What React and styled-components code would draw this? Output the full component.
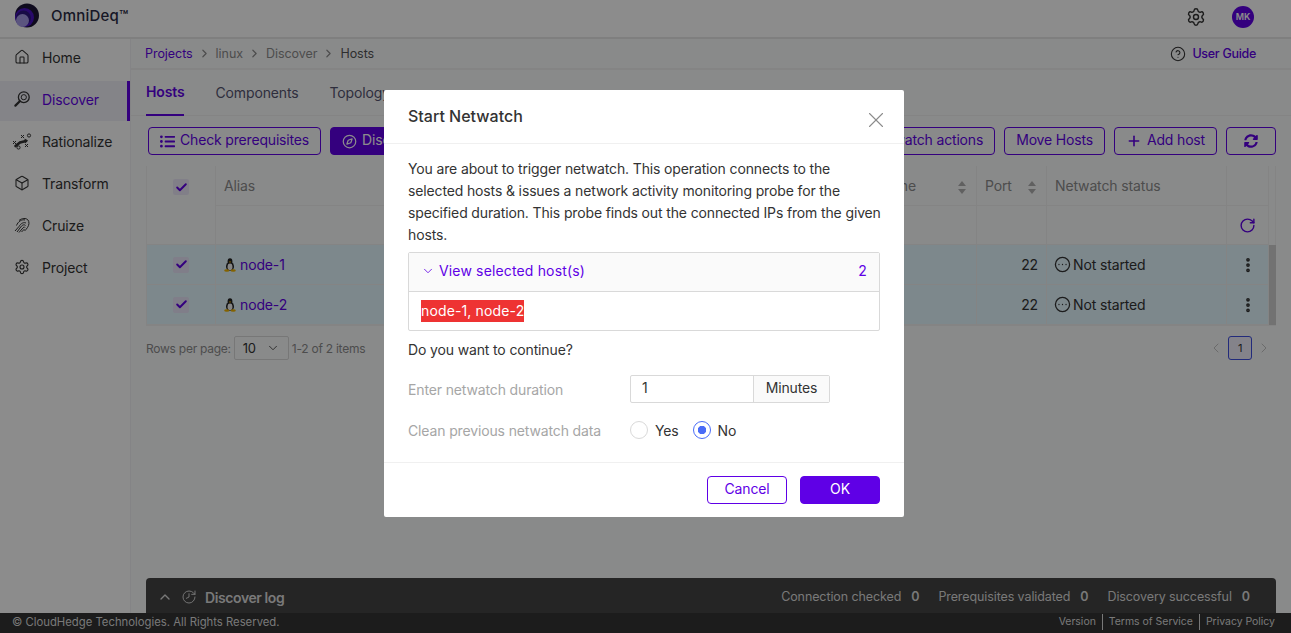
import React from 'react'
import styled, { createGlobalStyle } from 'styled-components'
import {
  House, Box, Settings, CircleHelp, Compass, Plus, RotateCw,
  EllipsisVertical, CircleEllipsis, ChevronUp, ChevronDown, ChevronLeft, ChevronRight,
  ChevronRight as Crumb, Check, X, History
} from 'lucide-react'
import { FaListUl, FaSyncAlt } from 'react-icons/fa'

const primary = '#5f00e6'

const GlobalStyle = createGlobalStyle`
  html, body { margin: 0; height: 100%; overflow: hidden; }
  body { font-family: Inter, "Open Sans", "Liberation Sans", sans-serif; font-size: 14px; letter-spacing: -0.14px; color: #333; background: #fff; }
  * { box-sizing: border-box; }
`

const Page = styled.div`
  height: 633px;
  display: flex;
  flex-direction: column;
  position: relative;
  overflow: hidden;
`

const TopBar = styled.header`
  height: 39px;
  flex: none;
  display: flex;
  align-items: center;
  padding: 0 37px 0 15px;
  border-bottom: 2px solid #e8e8e8;
  background: #fff;
`

const Brand = styled.div`
  display: flex;
  align-items: center;
  gap: 12px;
  margin-right: auto;
  font-size: 15px;
  letter-spacing: 0.2px;
  font-weight: 500;
  color: #2b2b45;
  margin-top: -7px;
`

const GearButton = styled.span`
  display: flex;
  margin-top: -4px;
  color: #333;
`

const Avatar = styled.div`
  width: 22px;
  height: 22px;
  border-radius: 50%;
  margin-left: 26px;
  margin-top: -4px;
  background: ${primary};
  color: #fff;
  font-size: 9px;
  font-weight: 600;
  display: flex;
  align-items: center;
  justify-content: center;
`

const Shell = styled.div`
  flex: 1;
  min-height: 0;
  display: flex;
`

const Sidebar = styled.nav`
  width: 131px;
  flex: none;
  border-right: 1px solid #f0f0f4;
`

const NavItem = styled.div`
  height: 40px;
  margin-bottom: 2px;
  padding: 0 0 4px 14px;
  display: flex;
  align-items: center;
  gap: 12px;
  font-size: 14px;
  color: ${p => (p.$active ? primary : '#333')};
  background: ${p => (p.$active ? '#f0f0f8' : 'transparent')};
  border-right: ${p => (p.$active ? `3px solid ${primary}` : '0')};
  svg { color: #333; flex: none; }
`

const Main = styled.main`
  flex: 1;
  min-width: 0;
  display: flex;
  flex-direction: column;
  background: #fafbfc;
  padding: 0 15px;
`

const Breadcrumb = styled.div`
  height: 31px;
  margin: 0 -15px;
  padding: 0 35px 0 14px;
  display: flex;
  align-items: center;
  gap: 5px;
  font-size: 12.5px;
  letter-spacing: -0.05px;
  color: #8c8c8c;
  border-bottom: 2px solid #f0f0f0;
  svg { color: #8c8c8c; }
`

const CrumbLink = styled.span`
  color: ${p => p.$color || 'inherit'};
`

const Guide = styled.div`
  margin-left: auto;
  display: flex;
  align-items: center;
  gap: 6px;
  color: ${primary};
  font-weight: 500;
  font-size: 12.5px;
  letter-spacing: -0.3px;
  svg { color: #333; }
`

const Tabs = styled.div`
  height: 46px;
  margin: 0 -15px;
  padding: 0 15px;
  display: flex;
  gap: 31px;
  border-bottom: 1px solid #f0f0f0;
`

const Tab = styled.div`
  height: 46px;
  display: flex;
  align-items: center;
  padding-bottom: 2px;
  font-size: 14px;
  font-weight: ${p => (p.$active ? 600 : 400)};
  color: ${p => (p.$active ? primary : '#555570')};
  border-bottom: ${p => (p.$active ? `2px solid ${primary}` : '0')};
`

const Toolbar = styled.div`
  display: flex;
  align-items: center;
  gap: 9px;
  padding: 11px 0 11px 2px;
`

const Button = styled.button`
  height: 28px;
  padding: 0 11px 3px;
  display: inline-flex;
  align-items: center;
  gap: 5px;
  border-radius: 4px;
  border: 1px solid ${primary};
  background: ${p => (p.$solid ? primary : 'transparent')};
  color: ${p => (p.$solid ? '#fff' : primary)};
  font: inherit;
  font-size: 14px;
  letter-spacing: -0.17px;
  white-space: nowrap;
  margin-left: ${p => (p.$push ? 'auto' : '0')};
  svg { margin-top: 3px; }
`

const IconButton = styled(Button)`
  width: 50px;
  justify-content: center;
`

const Table = styled.div`
  border: 1px solid #f0f0f0;
  border-top: 0;
  display: grid;
  grid-template-columns: 69px 384px 241px 136px 70px 180px 42px 7px;
  grid-template-rows: 40px 39px 40px 40px;
`

const Cell = styled.div`
  display: flex;
  align-items: center;
  gap: 4px;
  min-width: 0;
  padding: 0 8px;
  white-space: nowrap;
  overflow: hidden;
  color: ${p => (p.$head ? '#8c8c8c' : '#333')};
  background: ${p => (p.$selected ? '#e4f7ff' : 'transparent')};
  border-right: 1px solid #f0f0f0;
  border-bottom: 1px solid #f0f0f0;
  justify-content: ${p => p.$justify || 'flex-start'};
`

const StatusCell = styled(Cell)`
  gap: 2px;
  padding-left: 7px;
`

const SelectAll = styled(Cell)`
  grid-row: span 2;
  align-items: flex-start;
  padding-top: 13px;
`

const Gutter = styled.div`
  background: ${p => (p.$thumb ? '#d0d0d0' : 'transparent')};
`

const SortHead = styled(Cell)`
  justify-content: space-between;
  padding-right: 10px;
`

const SortArrows = styled.span`
  display: flex;
  flex-direction: column;
  gap: 3px;
  margin-top: 3px;
  &::before, &::after {
    content: '';
    border-left: 4px solid transparent;
    border-right: 4px solid transparent;
  }
  &::before { border-bottom: 5px solid #b0b0b0; }
  &::after { border-top: 5px solid #b0b0b0; }
`

const CheckBox = styled.span`
  width: 16px;
  height: 16px;
  border-radius: 2px;
  background: ${p => (p.$tint || '#ece8f8')};
  color: ${primary};
  display: flex;
  align-items: center;
  justify-content: center;
`

const HostLink = styled.span`
  color: ${primary};
`

const Pager = styled.div`
  display: flex;
  align-items: center;
  height: 24px;
  margin-top: 10px;
  font-size: 12px;
  letter-spacing: -0.25px;
  color: #8c8c8c;
  gap: 3px;
`

const PageSize = styled.div`
  width: 55px;
  height: 24px;
  display: flex;
  align-items: center;
  justify-content: space-between;
  padding: 0 8px;
  border: 1px solid #d9d9d9;
  border-radius: 2px;
  color: #333;
  font-size: 13px;
`

const PageNav = styled.div`
  margin-left: auto;
  margin-right: 4px;
  display: flex;
  align-items: center;
  gap: 4px;
  color: #bfbfbf;
`

const PageNumber = styled.div`
  width: 24px;
  height: 24px;
  border: 1px solid #3f4fe0;
  border-radius: 3px;
  background: #f0eefc;
  color: #333;
  font-size: 11px;
  display: flex;
  align-items: center;
  justify-content: center;
`

const LogBar = styled.div`
  margin-top: auto;
  height: 35px;
  padding: 1px 26px 0 11px;
  display: flex;
  align-items: center;
  background: #444;
  border-radius: 4px 4px 0 0;
  color: #dcdcdc;
  font-size: 12.5px;
  letter-spacing: -0.1px;
`

const LogTitle = styled.div`
  display: flex;
  align-items: center;
  gap: 8px;
  padding-top: 2px;
  font-size: 14px;
  letter-spacing: -0.4px;
  font-weight: 600;
  margin-right: auto;
`

const Stat = styled.div`
  margin-left: 19px;
  display: flex;
  gap: 10px;
  b { font-weight: 600; }
`

const Footer = styled.footer`
  height: 20px;
  flex: none;
  display: flex;
  align-items: center;
  padding: 0 16px 2px 12px;
  background: #333;
  color: #dcdcdc;
  font-size: 11.3px;
  letter-spacing: 0;
`

const FooterLink = styled.span`
  padding: 0 6px;
  font-size: 10.5px;
  letter-spacing: -0.03px;
  line-height: 16px;
  border-left: ${p => (p.$first ? '0' : '1px solid #dcdcdc')};
  margin-left: ${p => (p.$first ? 'auto' : '0')};
  &:last-child { padding-right: 0; }
`

const Overlay = styled.div`
  position: absolute;
  inset: 0;
  background: rgba(0, 0, 0, 0.45);
  padding: 90px 0 0 384px;
`

const Dialog = styled.div`
  width: 520px;
  height: 427px;
  background: #fff;
  border-radius: 2px;
  display: flex;
  flex-direction: column;
`

const DialogHeader = styled.div`
  height: 54px;
  flex: none;
  padding: 0 15px 2px 24px;
  display: flex;
  align-items: center;
  justify-content: space-between;
  border-bottom: 1px solid #f0f0f0;
  font-size: 16px;
  font-weight: 500;
  letter-spacing: 0;
  svg { color: #8c8c8c; margin-top: 8px; }
`

const DialogBody = styled.div`
  flex: 1;
  padding: 14px 24px 0;
`

const Paragraph = styled.p`
  margin: 0 -6px 0 0;
  line-height: 22px;
  font-size: 14px;
`

const Collapse = styled.div`
  margin-top: 6px;
  border: 1px solid #d9d9d9;
  border-radius: 2px;
`

const CollapseHead = styled.div`
  height: 39px;
  display: flex;
  align-items: center;
  gap: 4px;
  padding: 0 12px 3px;
  background: #fafafa;
  border-bottom: 1px solid #d9d9d9;
  color: ${primary};
  letter-spacing: 0.15px;
  span:last-child { margin-left: auto; }
`

const CollapseBody = styled.div`
  height: 38px;
  display: flex;
  align-items: center;
  padding: 0 12px;
`

const Tag = styled.span`
  background: #ee3333;
  color: #fff;
  line-height: 22px;
  letter-spacing: 0.14px;
`

const Question = styled.div`
  margin: 8px 0 14px;
  line-height: 22px;
`

const FormRow = styled.div`
  display: flex;
  align-items: center;
  height: 28px;
  margin-bottom: 13px;
`

const Label = styled.div`
  width: 222px;
  flex: none;
  color: #a6a6a6;
`

const InputGroup = styled.div`
  width: 200px;
  height: 28px;
  display: flex;
  border: 1px solid #d9d9d9;
  border-radius: 2px;
`

const InputValue = styled.div`
  flex: 1;
  padding: 0 0 3px 11px;
  display: flex;
  align-items: center;
`

const Addon = styled.div`
  width: 76px;
  padding-bottom: 3px;
  background: #fafafa;
  border-left: 1px solid #d9d9d9;
  display: flex;
  align-items: center;
  justify-content: center;
`

const Radio = styled.span`
  display: flex;
  align-items: center;
  gap: 7px;
  margin-right: 14px;
  &::before {
    content: '';
    width: 16px;
    height: 16px;
    border-radius: 50%;
    border: ${p => (p.$on ? '1px solid #4a6cf7' : '1px solid #d9d9d9')};
    background: ${p => (p.$on ? 'radial-gradient(circle, #4a6cf7 0 4px, #fff 4.5px)' : '#fff')};
  }
`

const DialogFooter = styled.div`
  height: 55px;
  flex: none;
  border-top: 1px solid #f0f0f0;
  padding: 0 24px;
  display: flex;
  align-items: center;
  justify-content: flex-end;
  gap: 13px;
`

const DialogButton = styled(Button)`
  width: 80px;
  justify-content: center;
`

const Logo = () => (
  <svg width="24" height="25" viewBox="0 0 24 25">
    <circle cx="12" cy="12.5" r="12" fill="#1c1538" />
    <circle cx="9.5" cy="14.5" r="9.5" fill="#4a12c4" />
    <circle cx="8.5" cy="15" r="7.5" fill="#2c1480" />
    <circle cx="7.5" cy="17.5" r="6.5" fill="#a79ce8" />
  </svg>
)

const DiscoverIcon = () => (
  <svg width="16" height="16" viewBox="0 0 16 16" fill="none" stroke="#333" strokeWidth="1.3">
    <circle cx="9.8" cy="6.2" r="5.4" />
    <circle cx="9.8" cy="6.2" r="2.6" strokeWidth="1" />
    <path d="M5.8 10.2 1.4 14.6" strokeWidth="2.2" strokeLinecap="round" />
  </svg>
)

const RationalizeIcon = () => (
  <svg width="20" height="17" viewBox="0 0 20 17" fill="none" stroke="#333" strokeWidth="1" style={{ margin: '0 -2px 0 -2px' }}>
    <path d="M1 8l3 3M4 8l-3 3M9 2l3 3M12 2 9 5M13 11l3 3M16 11l-3 3" />
    <circle cx="17" cy="2.5" r="1.6" />
    <circle cx="6.5" cy="14.5" r="1.6" />
    <path d="M3.5 13 8 9.5 14 8" strokeWidth="2.6" strokeLinecap="round" />
    <path d="M12.5 5.5 16 7.5 13 10.5z" fill="#333" stroke="none" />
  </svg>
)

const CruizeIcon = () => (
  <svg width="16" height="16" viewBox="0 0 16 16" fill="none" stroke="#333" strokeWidth="1">
    <path d="M1 14 5 9.5C7 6 10 5 12 6M3 15l3-4C8 8 10 7 11.5 8.5M5 15.5l3-3.5c1.5-2 2.5-2.5 3-1.5M7.5 15l3-3M2.5 8.5C4 4.5 8 2 11 3M5 3.5C8 1 12 .8 14 3c1.5 2 1.2 5-.5 7.5-1 1.5-2 2.5-3 3.5" />
  </svg>
)

const TuxIcon = () => (
  <svg width="12" height="14" viewBox="0 0 12 14">
    <ellipse cx="6" cy="3.4" rx="2.4" ry="3.2" fill="#222" />
    <ellipse cx="6" cy="8.4" rx="4" ry="4.4" fill="#222" />
    <ellipse cx="6" cy="8.8" rx="2.5" ry="3.4" fill="#f4f4f4" />
    <ellipse cx="2.8" cy="12.5" rx="2.6" ry="1.3" fill="#f0b400" />
    <ellipse cx="9.2" cy="12.5" rx="2.6" ry="1.3" fill="#f0b400" />
    <path d="M4.8 3.4h2.4L6 5z" fill="#f0b400" />
  </svg>
)

const navItems = [
  { label: 'Home', icon: <House size={16} strokeWidth={1.6} /> },
  { label: 'Discover', icon: <DiscoverIcon />, active: true },
  { label: 'Rationalize', icon: <RationalizeIcon /> },
  { label: 'Transform', icon: <Box size={16} strokeWidth={1.6} /> },
  { label: 'Cruize', icon: <CruizeIcon /> },
  { label: 'Project', icon: <Settings size={16} strokeWidth={1.7} /> }
]

const hosts = ['node-1', 'node-2']

const App = () => {
  return (
    <Page>
      <GlobalStyle />
      <TopBar>
        <Brand><Logo /> OmniDeq™</Brand>
        <GearButton><Settings size={20} strokeWidth={1.7} /></GearButton>
        <Avatar>MK</Avatar>
      </TopBar>

      <Shell>
        <Sidebar>
          {navItems.map(item => (
            <NavItem key={item.label} $active={item.active}>{item.icon}{item.label}</NavItem>
          ))}
        </Sidebar>

        <Main>
          <Breadcrumb>
            <CrumbLink $color={primary}>Projects</CrumbLink>
            <Crumb size={13} strokeWidth={2.2} />
            <span>linux</span>
            <Crumb size={13} strokeWidth={2.2} />
            <span>Discover</span>
            <Crumb size={13} strokeWidth={2.2} />
            <CrumbLink $color="#555">Hosts</CrumbLink>
            <Guide><CircleHelp size={16} strokeWidth={1.6} /> User Guide</Guide>
          </Breadcrumb>

          <Tabs>
            <Tab $active>Hosts</Tab>
            <Tab>Components</Tab>
            <Tab>Topology</Tab>
          </Tabs>

          <Toolbar>
            <Button><FaListUl size={15} /> Check prerequisites</Button>
            <Button $solid><Compass size={15} /> Discover</Button>
            <Button $push>Netwatch actions</Button>
            <Button>Move Hosts</Button>
            <Button><Plus size={16} strokeWidth={2.4} /> Add host</Button>
            <IconButton><FaSyncAlt size={14} /></IconButton>
          </Toolbar>

          <Table>
            <SelectAll $justify="center"><CheckBox><Check size={13} strokeWidth={3.6} /></CheckBox></SelectAll>
            <Cell $head>Alias</Cell>
            <Cell $head />
            <SortHead $head>Username <SortArrows /></SortHead>
            <SortHead $head>Port <SortArrows /></SortHead>
            <Cell $head>Netwatch status</Cell>
            <Cell />
            <Gutter />
            <Cell /><Cell /><Cell /><Cell /><Cell />
            <Cell $justify="center"><RotateCw size={17} strokeWidth={2} color={primary} /></Cell>
            <Gutter />
            {hosts.map(host => (
              <React.Fragment key={host}>
                <Cell $selected $justify="center"><CheckBox $tint="#e9e6fa"><Check size={13} strokeWidth={3.6} /></CheckBox></Cell>
                <Cell $selected><TuxIcon /> <HostLink>{host}</HostLink></Cell>
                <Cell $selected />
                <Cell $selected />
                <Cell $selected $justify="flex-end">22</Cell>
                <StatusCell $selected><CircleEllipsis size={17} strokeWidth={1.8} /> Not started</StatusCell>
                <Cell $selected $justify="center"><EllipsisVertical size={18} strokeWidth={3} /></Cell>
                <Gutter $thumb />
              </React.Fragment>
            ))}
          </Table>

          <Pager>
            Rows per page:
            <PageSize>10 <ChevronDown size={14} strokeWidth={1.4} /></PageSize>
            1-2 of 2 items
            <PageNav>
              <ChevronLeft size={16} strokeWidth={1.4} />
              <PageNumber>1</PageNumber>
              <ChevronRight size={16} strokeWidth={1.4} />
            </PageNav>
          </Pager>

          <LogBar>
            <LogTitle>
              <ChevronUp size={16} />
              <History size={16} strokeWidth={1.4} style={{ transform: 'scaleX(-1)' }} />
              Discover log
            </LogTitle>
            <Stat>Connection checked <b>0</b></Stat>
            <Stat>Prerequisites validated <b>0</b></Stat>
            <Stat>Discovery successful <b>0</b></Stat>
          </LogBar>
        </Main>
      </Shell>

      <Footer>
        © CloudHedge Technologies. All Rights Reserved.
        <FooterLink $first>Version</FooterLink>
        <FooterLink>Terms of Service</FooterLink>
        <FooterLink>Privacy Policy</FooterLink>
      </Footer>

      <Overlay>
        <Dialog>
          <DialogHeader>
            Start Netwatch
            <X size={26} strokeWidth={1} />
          </DialogHeader>
          <DialogBody>
            <Paragraph>
              You are about to trigger netwatch. This operation connects to the selected hosts &amp; issues a network activity monitoring probe for the specified duration. This probe finds out the connected IPs from the given hosts.
            </Paragraph>
            <Collapse>
              <CollapseHead>
                <ChevronDown size={14} strokeWidth={1.4} />
                <span>View selected host(s)</span>
                <span>2</span>
              </CollapseHead>
              <CollapseBody><Tag>node-1, node-2</Tag></CollapseBody>
            </Collapse>
            <Question>Do you want to continue?</Question>
            <FormRow>
              <Label>Enter netwatch duration</Label>
              <InputGroup>
                <InputValue>1</InputValue>
                <Addon>Minutes</Addon>
              </InputGroup>
            </FormRow>
            <FormRow>
              <Label>Clean previous netwatch data</Label>
              <Radio>Yes</Radio>
              <Radio $on>No</Radio>
            </FormRow>
          </DialogBody>
          <DialogFooter>
            <DialogButton>Cancel</DialogButton>
            <DialogButton $solid>OK</DialogButton>
          </DialogFooter>
        </Dialog>
      </Overlay>
    </Page>
  )
}

export default App
